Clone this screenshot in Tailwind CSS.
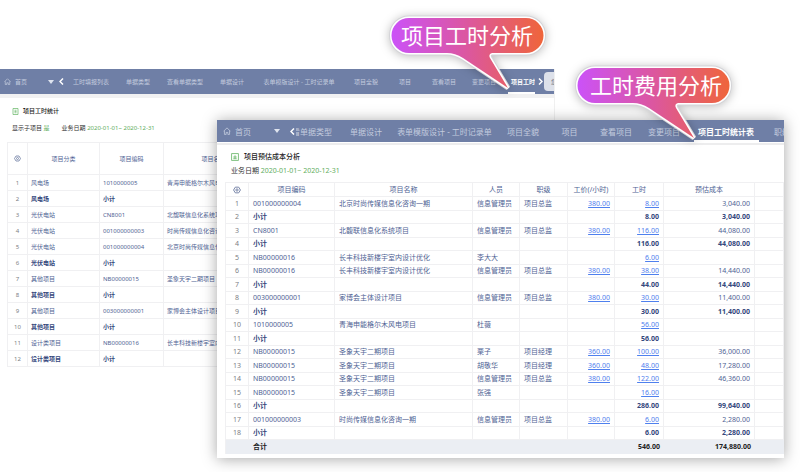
<!DOCTYPE html>
<html lang="zh-CN">
<head>
    <meta charset="UTF-8">
    <meta name="viewport" content="width=device-width, initial-scale=1.0">
    <title>项目工时分析</title>
    <script src="https://cdn.jsdelivr.net/npm/@tailwindcss/browser@4"></script>
</head>
<body class="relative min-h-screen overflow-hidden bg-white font-['Noto_Sans','Noto_Sans_CJK_SC',sans-serif] text-[#4f6394]">

    <!-- Hours window -->
    <section class="absolute left-0 right-[245px] top-[69px] h-[339px] overflow-hidden border-r border-[#f0f0f0] bg-white text-[6px] leading-[8px]">
        <nav class="flex h-[25px] items-center overflow-hidden whitespace-nowrap bg-[#6f7fa6] text-center text-[#c3cbde]">
            <a href="#" class="flex w-[46px] shrink-0 items-center gap-1 pl-1">
                <svg class="size-[7px]" viewBox="0 0 14 14" fill="none" stroke="currentColor" stroke-width="1.4"><path d="M1 7.5 7 1.5l6 6M2.5 6.5V13h3V9.500h3V13h3V6.500"/></svg>
                首页
            </a>
            <button class="w-[9px] shrink-0" aria-label="更多"><svg class="mx-auto h-[4px] w-[6px]" viewBox="0 0 6 4" fill="#dfe4ef"><path d="M0 0h6L3 4z"/></svg></button>
            <button class="w-[9px] shrink-0 pl-1" aria-label="向左"><svg class="h-[7px] w-[5px]" viewBox="0 0 5 7" fill="none" stroke="#fff" stroke-width="1.5"><path d="M4 .5 1 3.500l3 3"/></svg></button>
            <a href="#" class="w-[54px] shrink-0">工时填报列表</a>
            <a href="#" class="w-[40px] shrink-0">单据类型</a>
            <a href="#" class="w-[54px] shrink-0">查看单据类型</a>
            <a href="#" class="w-[40px] shrink-0">单据设计</a>
            <a href="#" class="w-[94px] shrink-0">表单模版设计 - 工时记录单</a>
            <a href="#" class="w-[40px] shrink-0">项目全貌</a>
            <a href="#" class="w-[38px] shrink-0">项目</a>
            <a href="#" class="w-[40px] shrink-0">查看项目</a>
            <a href="#" class="w-[40px] shrink-0">变更项目</a>
            <a href="#" class="ml-1 flex h-full w-[27px] shrink-0 items-center overflow-hidden border-b-2 border-white pl-[3px] pt-[2px] font-bold text-white">项目工时</a>
            <button class="w-[9px] shrink-0 pl-[3px]" aria-label="向右"><svg class="h-[7px] w-[5px]" viewBox="0 0 5 7" fill="none" stroke="#fff" stroke-width="1.5"><path d="m1 .5 3 3-3 3"/></svg></button>
            <button class="h-[19px] w-[20px] shrink-0 rounded-l-sm bg-[#dde1ea] pl-[7px] text-left text-[#6a7080]">您</button>
        </nav>
        <div class="h-1 bg-[#f1f1f2]"></div>
        <div class="px-3 pt-[9px]">
            <h2 class="flex items-center gap-1 font-medium text-[#222]">
                <svg class="size-[7px]" viewBox="0 0 14 14" fill="none" stroke="#63b463" stroke-width="1.400"><path d="M2 1h10v12H2zM5 4.500h4M5 7h4M5 9.500h4"/></svg>
                项目工时统计
            </h2>
            <p class="mt-[9px] flex gap-3 text-[#333]">
                <span>显示子项目 <span class="text-[#5fae60]">是</span></span>
                <span>业务日期 <span class="text-[#5fae60]">2020-01-01~ 2020-12-31</span></span>
            </p>
        </div>
        <div class="pl-[7px] pt-[10px]">
            <table class="w-full table-fixed border-separate border-spacing-0 border-l border-t border-[#f0f0f2]">
                <colgroup><col class="w-[20px]"><col class="w-[72px]"><col class="w-[64px]"><col class="w-[100px]"><col></colgroup>
                <thead>
                    <tr class="h-[32px] *:border-b *:border-r *:border-[#f0f0f2] *:p-0 *:font-normal">
                        <th><svg class="mx-auto size-[7px]" viewBox="0 0 14 14" fill="none" stroke="#66759d" stroke-width="1.500"><path d="m4 2h6l3 5-3 5H4L1 7z"/><circle cx="7" cy="7" r="2"/></svg></th>
                        <th>项目分类</th>
                        <th>项目编码</th>
                        <th>项目名称</th>
                        <th></th>
                    </tr>
                </thead>
                <tbody id="hoursRows"></tbody>
            </table>
        </div>
    </section>

    <!-- Cost window -->
    <section class="absolute left-[217px] right-[16px] top-[120px] overflow-hidden bg-white pb-1 text-[7px] leading-[9px] shadow-[0_1px_14px_rgba(0,0,0,0.35)]">
        <nav class="flex h-[22px] items-center overflow-hidden whitespace-nowrap bg-[#6f7fa6] text-center text-[8px] text-[#c3cbde]">
            <a href="#" class="flex w-[54px] shrink-0 items-center gap-1 pl-[6px]">
                <svg class="size-[8px]" viewBox="0 0 14 14" fill="none" stroke="currentColor" stroke-width="1.400"><path d="M1 7.500 7 1.500l6 6M2.500 6.500V13h3V9.500h3V13h3V6.500"/></svg>
                首页
            </a>
            <button class="w-[12px] shrink-0" aria-label="更多"><svg class="mx-auto h-[4px] w-[6px]" viewBox="0 0 6 4" fill="#dfe4ef"><path d="M0 0h6L3 4z"/></svg></button>
            <button class="w-[13px] shrink-0 pl-[7px]" aria-label="向左"><svg class="h-[7px] w-[5px]" viewBox="0 0 5 7" fill="none" stroke="#fff" stroke-width="1.500"><path d="M4 .5 1 3.500l3 3"/></svg></button>
            <a href="#" class="flex w-[46px] shrink-0 justify-end overflow-hidden pr-[10px]"><span class="flex w-[36px] justify-end overflow-hidden">看单据类型</span></a>
            <a href="#" class="w-[48px] shrink-0">单据设计</a>
            <a href="#" class="w-[109px] shrink-0">表单模版设计 - 工时记录单</a>
            <a href="#" class="w-[48px] shrink-0">项目全貌</a>
            <a href="#" class="w-[45px] shrink-0">项目</a>
            <a href="#" class="w-[48px] shrink-0">查看项目</a>
            <a href="#" class="w-[48px] shrink-0">变更项目</a>
            <a href="#" class="ml-[6px] flex h-full w-[65px] shrink-0 items-center border-b-2 border-white pl-1 pt-[2px] font-bold text-white">项目工时统计表</a>
            <a href="#" class="shrink-0 pl-[15px]">职级</a>
        </nav>
        <div class="mt-[1px] h-[2px] bg-[#ededee]"></div>
        <div class="px-[14px] pt-[7px]">
            <h2 class="flex items-center gap-[5px] font-medium text-[#222]">
                <svg class="size-[8px]" viewBox="0 0 14 14" fill="none" stroke="#63b463" stroke-width="1.400"><path d="M1 1h12v12H1zM4 7h6M7 4v6M4 10h6"/></svg>
                项目预估成本分析
            </h2>
            <p class="mt-[5px] text-[#333]">业务日期 <span class="text-[#5fae60]">2020-01-01~ 2020-12-31</span></p>
        </div>
        <div class="pl-2 pt-[7px]">
            <table class="w-full table-fixed border-separate border-spacing-0 border-l border-t border-[#f0f0f2] leading-[10px]">
                <colgroup><col class="w-[23px]"><col class="w-[86px]"><col class="w-[138px]"><col class="w-[47px]"><col class="w-[48px]"><col class="w-[47px]"><col class="w-[49px]"><col class="w-[91px]"><col></colgroup>
                <thead>
                    <tr class="h-[14px] *:border-b *:border-r *:border-[#f0f0f2] *:p-0 *:font-normal">
                        <th><svg class="mx-auto size-[8px]" viewBox="0 0 14 14" fill="none" stroke="#66759d" stroke-width="1.500"><path d="m4 2h6l3 5-3 5H4L1 7z"/><circle cx="7" cy="7" r="2"/></svg></th>
                        <th>项目编码</th>
                        <th>项目名称</th>
                        <th>人员</th>
                        <th>职级</th>
                        <th>工价(/小时)</th>
                        <th>工时</th>
                        <th>预估成本</th>
                        <th></th>
                    </tr>
                </thead>
                <tbody id="costRows"></tbody>
                <tfoot>
                    <tr class="h-[14px] bg-[#ebeef3] font-bold text-[#222] *:px-1 *:py-0">
                        <td></td>
                        <td>合计</td>
                        <td colspan="4"></td>
                        <td class="text-right">546.00</td>
                        <td class="text-right">174,880.00</td>
                        <td></td>
                    </tr>
                </tfoot>
            </table>
        </div>
    </section>

    <!-- Callouts -->
    <div class="absolute left-[382px] top-[8px] h-[90px] w-[172px]">
        <svg class="absolute inset-0 h-full w-full drop-shadow-[0_1px_5px_rgba(0,0,0,0.25)]" viewBox="0 0 172 90">
            <defs>
                <linearGradient id="bubble"><stop offset="0" stop-color="#cb52f8"/><stop offset=".5" stop-color="#dc579f"/><stop offset="1" stop-color="#ef653a"/></linearGradient>
            </defs>
            <path id="bubbleShape" d="M27 10H144a17.500 17.500 0 0 1 0 35H110Q106 46 108 50L126 80 81 50Q73 45 65 45H27a17.500 17.500 0 0 1 0-35Z" fill="none" stroke="#d4d4d8" stroke-width="5"/>
            <path d="M27 10H144a17.500 17.500 0 0 1 0 35H110Q106 46 108 50L126 80 81 50Q73 45 65 45H27a17.500 17.500 0 0 1 0-35Z" fill="url(#bubble)" stroke="#fff" stroke-width="3" paint-order="stroke"/>
        </svg>
        <p class="relative pr-[2px] pt-[10px] text-center text-[22px] font-normal leading-[35px] text-white">项目工时分析</p>
    </div>
    <div class="absolute left-[568px] top-[58px] h-[90px] w-[172px]">
        <svg class="absolute inset-0 h-full w-full drop-shadow-[0_1px_5px_rgba(0,0,0,0.25)]" viewBox="0 0 172 90">
            <use href="#bubbleShape"/>
            <path d="M27 10H144a17.500 17.500 0 0 1 0 35H110Q106 46 108 50L126 80 81 50Q73 45 65 45H27a17.500 17.500 0 0 1 0-35Z" fill="url(#bubble)" stroke="#fff" stroke-width="3" paint-order="stroke"/>
        </svg>
        <p class="relative pl-1 pt-[10px] text-center text-[22px] font-normal leading-[35px] text-white">工时费用分析</p>
    </div>

    <script>
        const hours = [
            ['风电场', '1010000005', '青海申能格尔木风电'],
            ['风电场', '小计', ''],
            ['光伏电站', 'CN8001', '北馥联信息化系统项'],
            ['光伏电站', '001000000003', '时尚传媒信息化咨询'],
            ['光伏电站', '001000000004', '北京时尚传媒信息化'],
            ['光伏电站', '小计', ''],
            ['其他项目', 'NB00000015', '圣象天宇二期项目'],
            ['其他项目', '小计', ''],
            ['其他项目', '003000000001', '家博会主体设计项目'],
            ['其他项目', '小计', ''],
            ['设计类项目', 'NB00000016', '长丰科技新楼宇室内'],
            ['设计类项目', '小计', '']
        ];

        const costs = [
            ['001000000004', '北京时尚传媒信息化咨询一期', '信息管理员', '项目总监', '380.00', '8.00', '3,040.00'],
            ['小计', '', '', '', '', '8.00', '3,040.00'],
            ['CN8001', '北馥联信息化系统项目', '信息管理员', '项目总监', '380.00', '116.00', '44,080.00'],
            ['小计', '', '', '', '', '116.00', '44,080.00'],
            ['NB00000016', '长丰科技新楼宇室内设计优化', '李大大', '', '', '6.00', ''],
            ['NB00000016', '长丰科技新楼宇室内设计优化', '信息管理员', '项目总监', '380.00', '38.00', '14,440.00'],
            ['小计', '', '', '', '', '44.00', '14,440.00'],
            ['003000000001', '家博会主体设计项目', '信息管理员', '项目总监', '380.00', '30.00', '11,400.00'],
            ['小计', '', '', '', '', '30.00', '11,400.00'],
            ['1010000005', '青海申能格尔木风电项目', '杜薇', '', '', '56.00', ''],
            ['小计', '', '', '', '', '56.00', ''],
            ['NB00000015', '圣象天宇二期项目', '栗子', '项目经理', '360.00', '100.00', '36,000.00'],
            ['NB00000015', '圣象天宇二期项目', '胡敬华', '项目经理', '360.00', '48.00', '17,280.00'],
            ['NB00000015', '圣象天宇二期项目', '信息管理员', '项目总监', '380.00', '122.00', '46,360.00'],
            ['NB00000015', '圣象天宇二期项目', '张强', '', '', '16.00', ''],
            ['小计', '', '', '', '', '286.00', '99,640.00'],
            ['001000000003', '时尚传媒信息化咨询一期', '信息管理员', '项目总监', '380.00', '6.00', '2,280.00'],
            ['小计', '', '', '', '', '6.00', '2,280.00']
        ];

        const numberCell = n => `<td class="text-center font-normal text-[#7d8084]">${n}</td>`;

        document.getElementById('hoursRows').innerHTML = hours.map((row, i) => {
            const bold = row[1] === '小计' ? 'font-bold text-[#34477c]' : '';
            const cells = row.map(text => `<td class="overflow-hidden whitespace-nowrap">${text}</td>`).join('');
            return `<tr class="h-[16px] *:border-b *:border-r *:border-[#f0f0f2] *:px-[3px] *:py-0 ${bold}">${numberCell(i + 1)}${cells}<td></td></tr>`;
        }).join('');

        document.getElementById('costRows').innerHTML = costs.map((row, i) => {
            const subtotal = row[0] === '小计';
            const bold = subtotal ? 'font-bold text-[#34477c]' : '';
            const cells = row.map((text, col) => {
                const link = (col === 4 || col === 5) && text && !subtotal;
                const body = link ? `<a href="#" class="text-[#4f80ee] underline">${text}</a>` : text;
                return `<td class="${col > 3 ? 'text-right' : 'whitespace-nowrap'}">${body}</td>`;
            }).join('');
            return `<tr class="h-[14px] even:h-[13px] *:border-b *:border-r *:border-[#f0f0f2] *:px-1 *:py-0 ${bold}">${numberCell(i + 1)}${cells}<td></td></tr>`;
        }).join('');
    </script>
</body>
</html>
